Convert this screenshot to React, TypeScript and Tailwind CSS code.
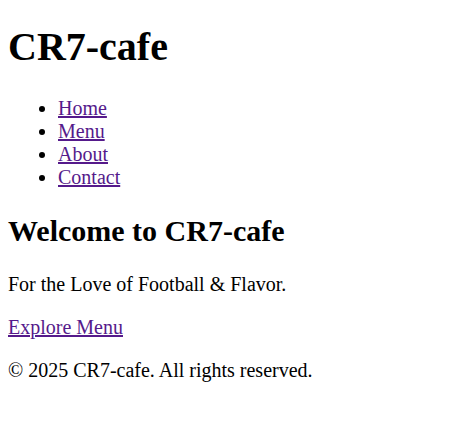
import React from 'react';

const links = ['Home', 'Menu', 'About', 'Contact'];

export default function App() {
    return (
        <div className="min-h-screen bg-white text-black font-['Liberation_Serif','Times_New_Roman',serif] text-[20px] leading-[23px]">
            <div className="flex flex-col px-[8px] pt-[24px]">
                {/* HEADER */}
                <header className="flex flex-col gap-[26.8px]">
                    <h1 className="text-[40px] leading-[46px] font-bold">CR7-cafe</h1>
                    <nav>
                        <ul className="list-disc pl-[50px]">
                            {links.map((l) => (
                                <li key={l}>
                                    <a href="#" className="text-[#551a8b] underline">{l}</a>
                                </li>
                            ))}
                        </ul>
                    </nav>
                </header>

                {/* HERO */}
                <section className="flex flex-col mt-[24.9px]">
                    <h2 className="text-[30px] leading-[34.5px] font-bold">Welcome to CR7-cafe</h2>
                    <p className="mt-[24.9px]">For the Love of Football &amp; Flavor.</p>
                    <p className="mt-[20px]">
                        <a href="#" className="text-[#551a8b] underline">Explore Menu</a>
                    </p>
                </section>

                <footer className="mt-[20px]">
                    <p>© 2025 CR7-cafe. All rights reserved.</p>
                </footer>
            </div>
        </div>
    );
}
